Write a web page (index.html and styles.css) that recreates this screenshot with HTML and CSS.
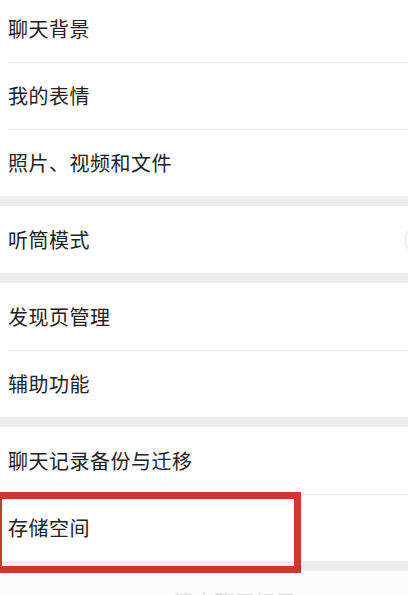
FILE: index.html
```html
<!DOCTYPE html>
<html lang="zh-CN">
<head>
  <meta charset="UTF-8">
  <meta name="viewport" content="width=device-width, initial-scale=1.0">
  <title>通用</title>
  <link rel="stylesheet" href="styles.css">
</head>
<body>
  <div class="settings">
    <div class="group first">
      <div class="row"><span class="label">聊天背景</span></div>
      <div class="row"><span class="label">我的表情</span></div>
      <div class="row"><span class="label">照片、视频和文件</span></div>
    </div>

    <div class="group">
      <div class="row">
        <span class="label">听筒模式</span>
        <span class="switch"></span>
      </div>
    </div>

    <div class="group">
      <div class="row"><span class="label">发现页管理</span></div>
      <div class="row"><span class="label">辅助功能</span></div>
    </div>

    <div class="group">
      <div class="row"><span class="label">聊天记录备份与迁移</span></div>
      <div class="row marked">
        <span class="label">存储空间</span>
        <span class="highlight"></span>
      </div>
    </div>

    <div class="group plain">
      <div class="row center"><span class="label faint">清空聊天记录</span></div>
    </div>
  </div>
</body>
</html>
```

FILE: styles.css
```css
html, body {
  height: 100%;
  overflow: hidden;
}

body {
  margin: 0;
  padding: 0;
  background-color: #ededed;
  font-family: "Noto Sans CJK SC", "Noto Sans", sans-serif;
  color: #222;
}

.settings {
  display: flex;
  flex-direction: column;
  gap: 10px;
}

.group {
  background-color: #fff;
}

.group.first {
  margin-top: -5px;
}

.row {
  position: relative;
  display: flex;
  align-items: center;
  justify-content: space-between;
  height: 67px;
  padding-left: 8px;
}

.row + .row::before {
  content: "";
  position: absolute;
  top: 0;
  left: 8px;
  right: 0;
  height: 1px;
  background-color: #ebebeb;
}

.label {
  font-size: 20px;
  letter-spacing: 0.5px;
  line-height: 1;
}

.switch {
  width: 52px;
  height: 32px;
  margin-right: -50px;
  border-radius: 16px;
  background-color: #fff;
  box-shadow: 0 0 0 1px #e6e6e6, -1px 0 2px rgba(0, 0, 0, 0.06);
}

.highlight {
  position: absolute;
  top: -2px;
  left: -5px;
  width: 292px;
  height: 67px;
  border: 7px solid #c8392e;
}

.group.plain {
  background-color: #fcfcfc;
}

.row.center {
  justify-content: center;
  padding-left: 62px;
  align-items: flex-start;
  padding-top: 21px;
  box-sizing: border-box;
}

.faint {
  color: #dcdcdc;
}
```
